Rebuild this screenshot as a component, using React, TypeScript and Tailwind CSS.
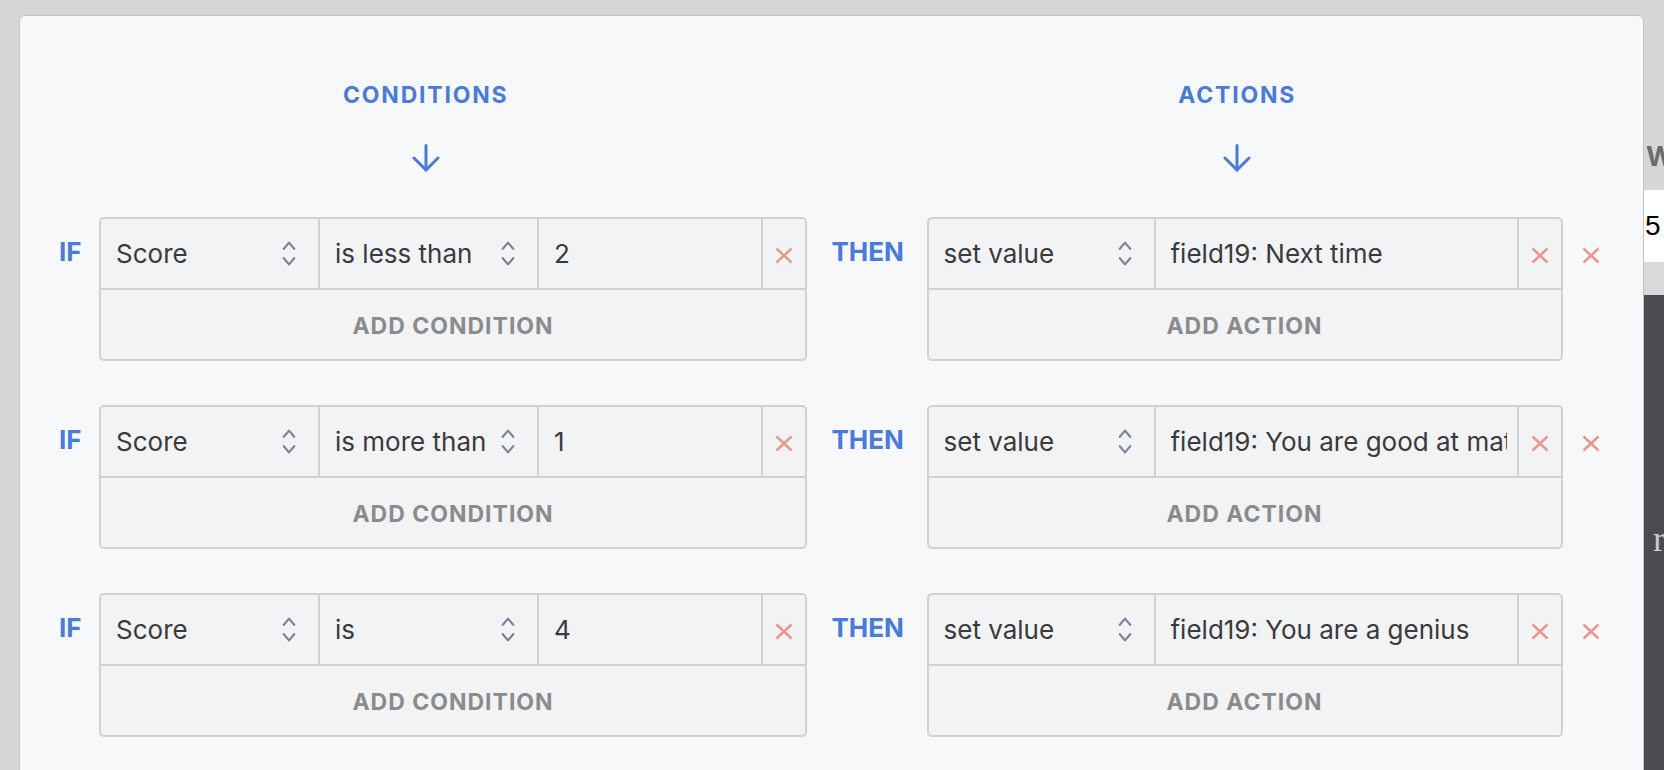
import React from "react";

const BLUE = "text-[#4a7bd6]";

function Chevrons() {
  return (
    <svg width="14" height="25" viewBox="0 0 14 25" fill="none" stroke="#7c839a" strokeWidth="2.2" strokeLinecap="round" strokeLinejoin="round">
      <path d="M1.8 7.8 L7 1.6 L12.2 7.8" />
      <path d="M1.8 17.2 L7 23.4 L12.2 17.2" />
    </svg>
  );
}

function XIcon() {
  return (
    <svg width="18" height="17" viewBox="0 0 18 17" fill="none" stroke="#ea958a" strokeWidth="2.4">
      <path d="M1.5 1.5 L16.5 15.5 M16.5 1.5 L1.5 15.5" />
    </svg>
  );
}

function ArrowDown() {
  return (
    <svg width="28" height="28" viewBox="0 0 28 28" fill="none" stroke="#4a7bd6" strokeWidth="3" strokeLinecap="round" strokeLinejoin="round">
      <path d="M14 1.5 V26" />
      <path d="M2 14 L14 26 L26 14" />
    </svg>
  );
}

function Header({ title }: { title: string }) {
  return (
    <div className="flex flex-col items-center">
      <div className={`h-[28px] text-[23px] leading-[28px] font-bold tracking-[1.8px] ${BLUE}`}>{title}</div>
      <div className="mt-[35px] h-[28px]">
        <ArrowDown />
      </div>
    </div>
  );
}

function SelectCell({ value, width }: { value: string; width: string }) {
  return (
    <div className={`flex h-full ${width} shrink-0 items-center justify-between border-r-2 border-[#d0d1d3] pl-[15px] pr-[22px]`}>
      <span className="whitespace-nowrap">{value}</span>
      <Chevrons />
    </div>
  );
}

function XCell() {
  return (
    <div className="flex h-full flex-1 items-center justify-center pt-[4px]">
      <XIcon />
    </div>
  );
}

function AddRow({ label }: { label: string }) {
  return (
    <div className="flex h-[69px] items-center justify-center pt-[3px] text-[23px] font-bold tracking-[1px] text-[#8a8b8d]">
      {label}
    </div>
  );
}

function ConditionRow({ op, value }: { op: string; value: string }) {
  return (
    <div className="flex items-start">
      <div className={`flex h-[71px] w-[40px] shrink-0 items-center pb-[2px] text-[26px] font-bold leading-none ${BLUE}`}>IF</div>
      <div className="w-[708px] shrink-0 overflow-hidden rounded-[5px] border-2 border-[#d0d1d3] bg-[#f2f3f5]">
        <div className="flex h-[71px] border-b-2 border-[#d0d1d3] text-[26px] text-[#3a3a3c]">
          <SelectCell value="Score" width="w-[219px]" />
          <SelectCell value={op} width="w-[219px]" />
          <div className="flex h-full w-[224px] shrink-0 items-center border-r-2 border-[#d0d1d3] pl-[15px]">{value}</div>
          <XCell />
        </div>
        <AddRow label="ADD CONDITION" />
      </div>
    </div>
  );
}

function ActionRow({ text }: { text: string }) {
  return (
    <div className="flex items-start">
      <div className={`flex h-[71px] w-[95px] shrink-0 items-center pb-[2px] text-[26px] font-bold leading-none ${BLUE}`}>THEN</div>
      <div className="w-[636px] shrink-0 overflow-hidden rounded-[5px] border-2 border-[#d0d1d3] bg-[#f2f3f5]">
        <div className="flex h-[71px] border-b-2 border-[#d0d1d3] text-[26px] text-[#3a3a3c]">
          <SelectCell value="set value" width="w-[227px]" />
          <div className="flex h-full w-[363px] shrink-0 items-center border-r-2 border-[#d0d1d3] pl-[15px] pr-[10px]">
            <div className="overflow-hidden whitespace-nowrap">{text}</div>
          </div>
          <XCell />
        </div>
        <AddRow label="ADD ACTION" />
      </div>
      <div className="flex h-[71px] w-[57px] shrink-0 items-center justify-center pt-[6px]">
        <XIcon />
      </div>
    </div>
  );
}

export default function App() {
  return (
    <div className="flex h-[770px] w-[1664px] items-start overflow-hidden bg-[#d6d6d6] pl-[19px] font-['Inter',sans-serif]">
      <div className="mt-[15px] grid h-[790px] w-[1625px] shrink-0 grid-cols-2 rounded-t-[6px] border border-[#c3c3c3] bg-[#f7f8fa] pt-[65px]">
        <div className="flex flex-col">
          <Header title="CONDITIONS" />
          <div className="mt-[45px] flex flex-col gap-[44px] pl-[39px]">
            <ConditionRow op="is less than" value="2" />
            <ConditionRow op="is more than" value="1" />
            <ConditionRow op="is" value="4" />
          </div>
        </div>
        <div className="flex flex-col">
          <Header title="ACTIONS" />
          <div className="mt-[45px] flex flex-col gap-[44px]">
            <ActionRow text="field19: Next time" />
            <ActionRow text="field19: You are good at math" />
            <ActionRow text="field19: You are a genius" />
          </div>
        </div>
      </div>
      <div className="flex h-[770px] w-[20px] shrink-0 flex-col overflow-hidden">
        <div className="h-[190px] shrink-0 bg-[#d6d6d6] pl-[2px] pt-[143px] text-[27px] font-bold leading-[27px] text-[#6b6b6b]">W</div>
        <div className="h-[72px] shrink-0 bg-white pl-[1px] pt-[22px] font-['Liberation_Sans',sans-serif] text-[28px] leading-[28px] text-black">5</div>
        <div className="h-[33px] shrink-0 bg-[#d9d9d9]" />
        <div className="flex-1 bg-[#4a4b50] pl-[9px] pt-[226px] font-['Liberation_Serif',serif] text-[36px] leading-none text-[#c9c9c9]">r</div>
      </div>
    </div>
  );
}
